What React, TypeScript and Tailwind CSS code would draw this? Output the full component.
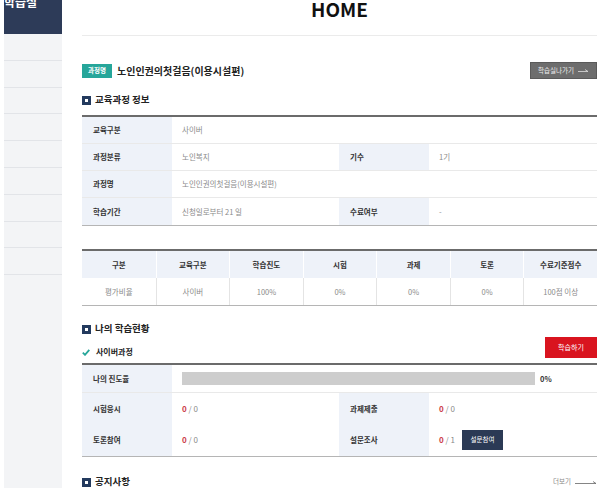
import React from 'react';

const th = 'flex items-center pl-[11px] bg-[#eef2f9] text-[7.5px] font-bold text-[#333]';
const td = 'flex items-center pl-[10px] text-[7.5px] text-[#8a8a8a]';

const SectionTitle = ({ title }: { title: string }) => (
  <div className="flex items-center h-[14px]">
    <span className="w-[9px] h-[9px] border-[3px] border-[#233a5e] bg-white mr-[4px]" />
    <span className="text-[9.5px] font-bold text-[#222] leading-none">{title}</span>
  </div>
);

const Count = ({ done, total }: { done: number; total: number }) => (
  <span className="text-[8px]">
    <span className="font-bold text-[#cc3d4a]">{done}</span>
    <span className="text-[#8a8a8a]"> / {total}</span>
  </span>
);

const stats = [
  ['구분', '평가비율'],
  ['교육구분', '사이버'],
  ['학습진도', '100%'],
  ['시험', '0%'],
  ['과제', '0%'],
  ['토론', '0%'],
  ['수료기준점수', '100점 이상'],
];

export default function App() {
  return (
    <div className="flex w-[610px] h-[488px] overflow-hidden bg-white [font-family:'Noto_Sans_CJK_KR','Noto_Sans',sans-serif]">
      <div className="w-[4px] shrink-0" />

      {/* sidebar */}
      <aside className="w-[58px] shrink-0 bg-[#f3f4f6] flex flex-col">
        <div className="h-[34px] bg-[#2d3b58] overflow-hidden">
          <div className="-mt-[6px] text-[12px] font-bold text-white leading-[16px] whitespace-nowrap">학습실</div>
        </div>
        {[...Array(9)].map((_, i) => (
          <div key={i} className="h-[26.8px] border-b border-[#e2e4e8]" />
        ))}
      </aside>

      <main className="flex-1 pl-[20px] pr-[13px]">
        {/* header */}
        <div className="h-[36px] border-b border-[#ebebeb] flex justify-center">
          <h1 className="text-[19px] font-bold text-[#111] leading-[18px]">HOME</h1>
        </div>

        {/* course title */}
        <div className="mt-[26px] h-[17px] flex items-center justify-between">
          <div className="flex items-center">
            <span className="w-[30px] h-[14px] bg-[#26a69a] text-white text-[6.5px] font-bold flex items-center justify-center">과정명</span>
            <span className="ml-[5px] text-[10px] font-bold text-[#222]">노인인권의첫걸음(이용시설편)</span>
          </div>
          <button className="w-[67px] h-[17px] bg-[#6d6d6d] border border-[#5a5a5a] text-[#eee] text-[6.5px] flex items-center justify-center gap-[4px]">
            학습실나가기
            <svg width="11" height="5" viewBox="0 0 11 5" fill="none" stroke="#ddd" strokeWidth="0.8">
              <path d="M0 3.5H10M7 1.5L10 3.5" />
            </svg>
          </button>
        </div>

        <div className="mt-[14px]">
          <SectionTitle title="교육과정 정보" />
        </div>

        {/* course info table */}
        <div className="mt-[8px] border-t-2 border-t-[#6b6b6b] border-b border-b-[#b5b5b5]">
          <div className="grid grid-cols-[90px_167px_90px_1fr] h-[27px] border-b border-[#e9e9e9]">
            <div className={th}>교육구분</div>
            <div className={`${td} col-span-3`}>사이버</div>
          </div>
          <div className="grid grid-cols-[90px_167px_90px_1fr] h-[27px] border-b border-[#e9e9e9]">
            <div className={th}>과정분류</div>
            <div className={td}>노인복지</div>
            <div className={th}>기수</div>
            <div className={td}>1기</div>
          </div>
          <div className="grid grid-cols-[90px_167px_90px_1fr] h-[27px] border-b border-[#e9e9e9]">
            <div className={th}>과정명</div>
            <div className={`${td} col-span-3`}>노인인권의첫걸음(이용시설편)</div>
          </div>
          <div className="grid grid-cols-[90px_167px_90px_1fr] h-[27px]">
            <div className={th}>학습기간</div>
            <div className={td}>신청일로부터 21 일</div>
            <div className={th}>수료여부</div>
            <div className={td}>-</div>
          </div>
        </div>

        {/* evaluation table */}
        <div className="mt-[23px] border-t-2 border-t-[#6b6b6b] border-b border-b-[#b5b5b5]">
          <div className="grid grid-cols-7 h-[27px] bg-[#eef2f9]">
            {stats.map(([h], i) => (
              <div key={h} className={`flex items-center justify-center text-[7.5px] font-bold text-[#333] ${i > 0 ? 'border-l border-white' : ''}`}>{h}</div>
            ))}
          </div>
          <div className="grid grid-cols-7 h-[27px]">
            {stats.map(([h, v], i) => (
              <div key={h} className={`flex items-center justify-center text-[7.5px] text-[#8a8a8a] ${i > 0 ? 'border-l border-[#e4e4e4]' : ''}`}>{v}</div>
            ))}
          </div>
        </div>

        <div className="mt-[16px]">
          <SectionTitle title="나의 학습현황" />
        </div>

        <div className="mt-[1px] flex items-end justify-between">
          <div className="flex items-center h-[12px]">
            <svg width="8" height="7" viewBox="0 0 8 7" fill="none" stroke="#26a69a" strokeWidth="1.8">
              <path d="M0.8 3.6L3 5.8L7.3 0.8" />
            </svg>
            <span className="ml-[6px] text-[8px] font-bold text-[#222]">사이버과정</span>
          </div>
          <button className="w-[52px] h-[21px] bg-[#d9141f] text-white text-[7px] flex items-center justify-center">학습하기</button>
        </div>

        {/* my progress table */}
        <div className="mt-[5px] border-t-2 border-t-[#6b6b6b] border-b border-b-[#b5b5b5]">
          <div className="grid grid-cols-[90px_167px_90px_1fr] h-[28px] border-b border-[#e9e9e9]">
            <div className={th}>나의 진도율</div>
            <div className="col-span-3 flex items-center pl-[10px]">
              <div className="w-[353px] h-[13px] bg-[#cdcdcd]" />
              <span className="ml-[5px] text-[7.5px] font-bold text-[#333]">0%</span>
            </div>
          </div>
          <div className="grid grid-cols-[90px_167px_90px_1fr] h-[31px]">
            <div className={th}>시험응시</div>
            <div className={td}><Count done={0} total={0} /></div>
            <div className={th}>과제제출</div>
            <div className={td}><Count done={0} total={0} /></div>
          </div>
          <div className="grid grid-cols-[90px_167px_90px_1fr] h-[32px]">
            <div className={th}>토론참여</div>
            <div className={td}><Count done={0} total={0} /></div>
            <div className={th}>설문조사</div>
            <div className={td}>
              <Count done={0} total={1} />
              <button className="ml-[7px] w-[41px] h-[20px] bg-[#2b3a55] text-white text-[6.5px] flex items-center justify-center">설문참여</button>
            </div>
          </div>
        </div>

        <div className="mt-[18px] flex items-center justify-between">
          <SectionTitle title="공지사항" />
          <div className="flex items-center gap-[4px] text-[6.5px] text-[#888]">
            더보기
            <svg width="22" height="5" viewBox="0 0 22 5" fill="none" stroke="#666" strokeWidth="0.8">
              <path d="M0 3.5H21M18 1.5L21 3.5" />
            </svg>
          </div>
        </div>
      </main>
    </div>
  );
}
